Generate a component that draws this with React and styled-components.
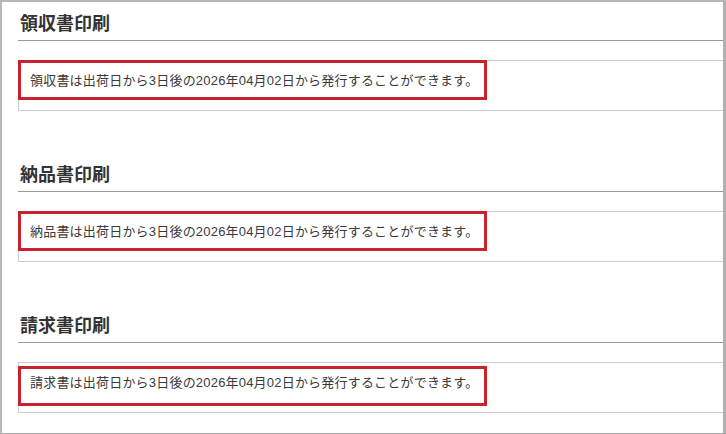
import React from "react";
import styled, { createGlobalStyle } from "styled-components";

const GlobalStyle = createGlobalStyle`
  html, body {
    margin: 0;
    padding: 0;
    background: #ffffff;
  }
  body {
    font-family: "Liberation Sans", "Noto Sans CJK JP", sans-serif;
    color: #333333;
  }
`;

const sections = [
  { title: "領収書印刷", name: "領収書", offset: -1 },
  { title: "納品書印刷", name: "納品書", offset: -1 },
  { title: "請求書印刷", name: "請求書", offset: 3 },
];

function App() {
  return (
    <>
      <GlobalStyle />
      <Frame>
        <Content>
          {sections.map((s) => (
            <Section key={s.title}>
              <Heading>{s.title}</Heading>
              <Panel>
                <Message>
                  {s.name}は出荷日から3日後の2026年04月02日から発行することができます。
                </Message>
                <Highlight $offset={s.offset} />
              </Panel>
            </Section>
          ))}
        </Content>
        <Footer />
      </Frame>
    </>
  );
}

export default App;

const Frame = styled.div`
  box-sizing: border-box;
  width: 726px;
  height: 434px;
  border-top: 2px solid #b8b8b8;
  border-left: 2px solid #b8b8b8;
  border-right: 3px solid #b0b0b0;
  border-bottom: 1px solid #a8a8a8;
  display: flex;
  flex-direction: column;
  overflow: hidden;
`;

const Content = styled.div`
  flex: 1;
  padding-left: 16px;
`;

const Section = styled.section`
  margin-bottom: 42px;
`;

const Heading = styled.h2`
  margin: 0;
  padding: 10px 0 8px 2px;
  font-family: "Noto Sans CJK JP", sans-serif;
  font-size: 18px;
  line-height: 20px;
  font-weight: 700;
  color: #333333;
  border-bottom: 1px solid #9a9a9a;
`;

const Panel = styled.div`
  position: relative;
  margin-top: 19px;
  padding: 12px 0 21px 11px;
  border-top: 1px solid #cccccc;
  border-left: 1px solid #cccccc;
  border-bottom: 1px solid #cccccc;
`;

const Message = styled.p`
  margin: 0;
  font-size: 13px;
  line-height: 16px;
  letter-spacing: 0.2px;
  color: #3a3a3a;
`;

const Highlight = styled.div`
  position: absolute;
  left: -1px;
  top: ${(p) => p.$offset}px;
  box-sizing: border-box;
  width: 469px;
  height: 40px;
  border: 3px solid #c8232c;
  pointer-events: none;
`;

const Footer = styled.div`
  height: 7px;
  background: #e6e6e6;
`;
